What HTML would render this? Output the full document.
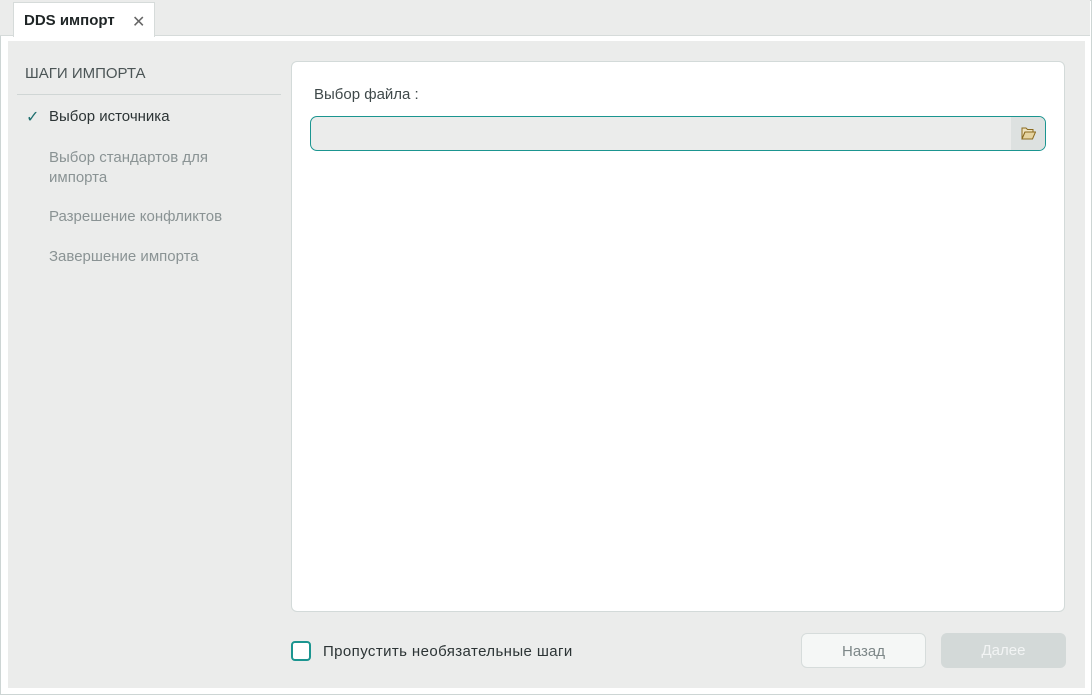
<!DOCTYPE html>
<html><head><meta charset="utf-8"><style>
*{box-sizing:border-box;margin:0;padding:0}
body{width:1092px;height:695px;background:#fff;font-family:"Liberation Sans",sans-serif;position:relative;overflow:hidden}
.outer{position:absolute;left:0;top:0;width:1092px;height:695px;border:1px solid #cdd5d4;background:#fff}
.topbar{position:absolute;left:0;top:0;width:1090px;height:36px;background:#ebeceb;border-bottom:1px solid #d6dbda}
.tab{position:absolute;left:13px;top:2px;width:142px;height:35px;background:#fff;border:1px solid #d6dbda;border-bottom:none}
.tab b{position:absolute;left:10px;top:9px;font-size:15px;color:#1f2526}
.tab .x{position:absolute;left:118px;top:9px;font-size:16px;color:#666;font-weight:300}
.panel{position:absolute;left:8px;top:41px;width:1077px;height:647px;background:#ebeceb}
.abs{position:absolute;white-space:nowrap}
.card{position:absolute;left:291px;top:61px;width:774px;height:551px;background:#fff;border:1px solid #d3dad9;border-radius:6px}
</style></head><body>
<div class="outer"></div>
<div class="topbar"></div>
<div class="tab"><b>DDS импорт</b><span class="x">✕</span></div>
<div class="panel"></div>
<div class="abs" style="left:25px;top:65px;font-size:15px;color:#4b5556">ШАГИ ИМПОРТА</div>
<div class="abs" style="left:17px;top:94px;width:264px;height:1px;background:#d0d6d5"></div>
<div class="abs" style="left:26px;top:107px;font-size:16px;color:#1f6f6f">✓</div>
<div class="abs" style="left:49px;top:108px;font-size:15px;color:#2c3435">Выбор источника</div>
<div class="abs" style="left:49px;top:148px;font-size:15px;color:#8a9394;line-height:20px">Выбор стандартов для<br>импорта</div>
<div class="abs" style="left:49px;top:208px;font-size:15px;color:#8a9394">Разрешение конфликтов</div>
<div class="abs" style="left:49px;top:248px;font-size:15px;color:#8a9394">Завершение импорта</div>
<div class="card"></div>
<div class="abs" style="left:314px;top:86px;font-size:15px;color:#3f494a">Выбор файла :</div>
<div class="abs" style="left:310px;top:116px;width:736px;height:35px;background:#ebeceb;border:1px solid #1b9590;border-radius:7px;overflow:hidden">
<div style="position:absolute;right:0;top:0;width:34px;height:33px;background:#dde1e0"></div>
<svg style="position:absolute;right:9px;top:10px" width="15" height="13" viewBox="0 0 15 13"><path d="M1 1h4l1.5 1.5H12V5H4L1 12Z" fill="#efe3bf" stroke="#8b6a1e"/><path d="M1 12L4 5h10.5l-3 7Z" fill="#e5d3a0" stroke="#8b6a1e"/></svg>
</div>
<div class="abs" style="left:291px;top:641px;width:20px;height:20px;border:2px solid #1b9590;border-radius:4px;background:#fff"></div>
<div class="abs" style="left:323px;top:643px;font-size:15px;color:#2c3435;letter-spacing:0.4px">Пропустить необязательные шаги</div>
<div class="abs" style="left:801px;top:633px;width:125px;height:35px;border:1px solid #d6dcdb;border-radius:6px;background:#f5f7f6;color:#7d8788;font-size:15px;text-align:center;line-height:35px">Назад</div>
<div class="abs" style="left:941px;top:633px;width:125px;height:35px;border-radius:6px;background:#d3d9d8;color:#f2f4f4;font-size:15px;text-align:center;line-height:36px">Далее</div>
</body></html>
